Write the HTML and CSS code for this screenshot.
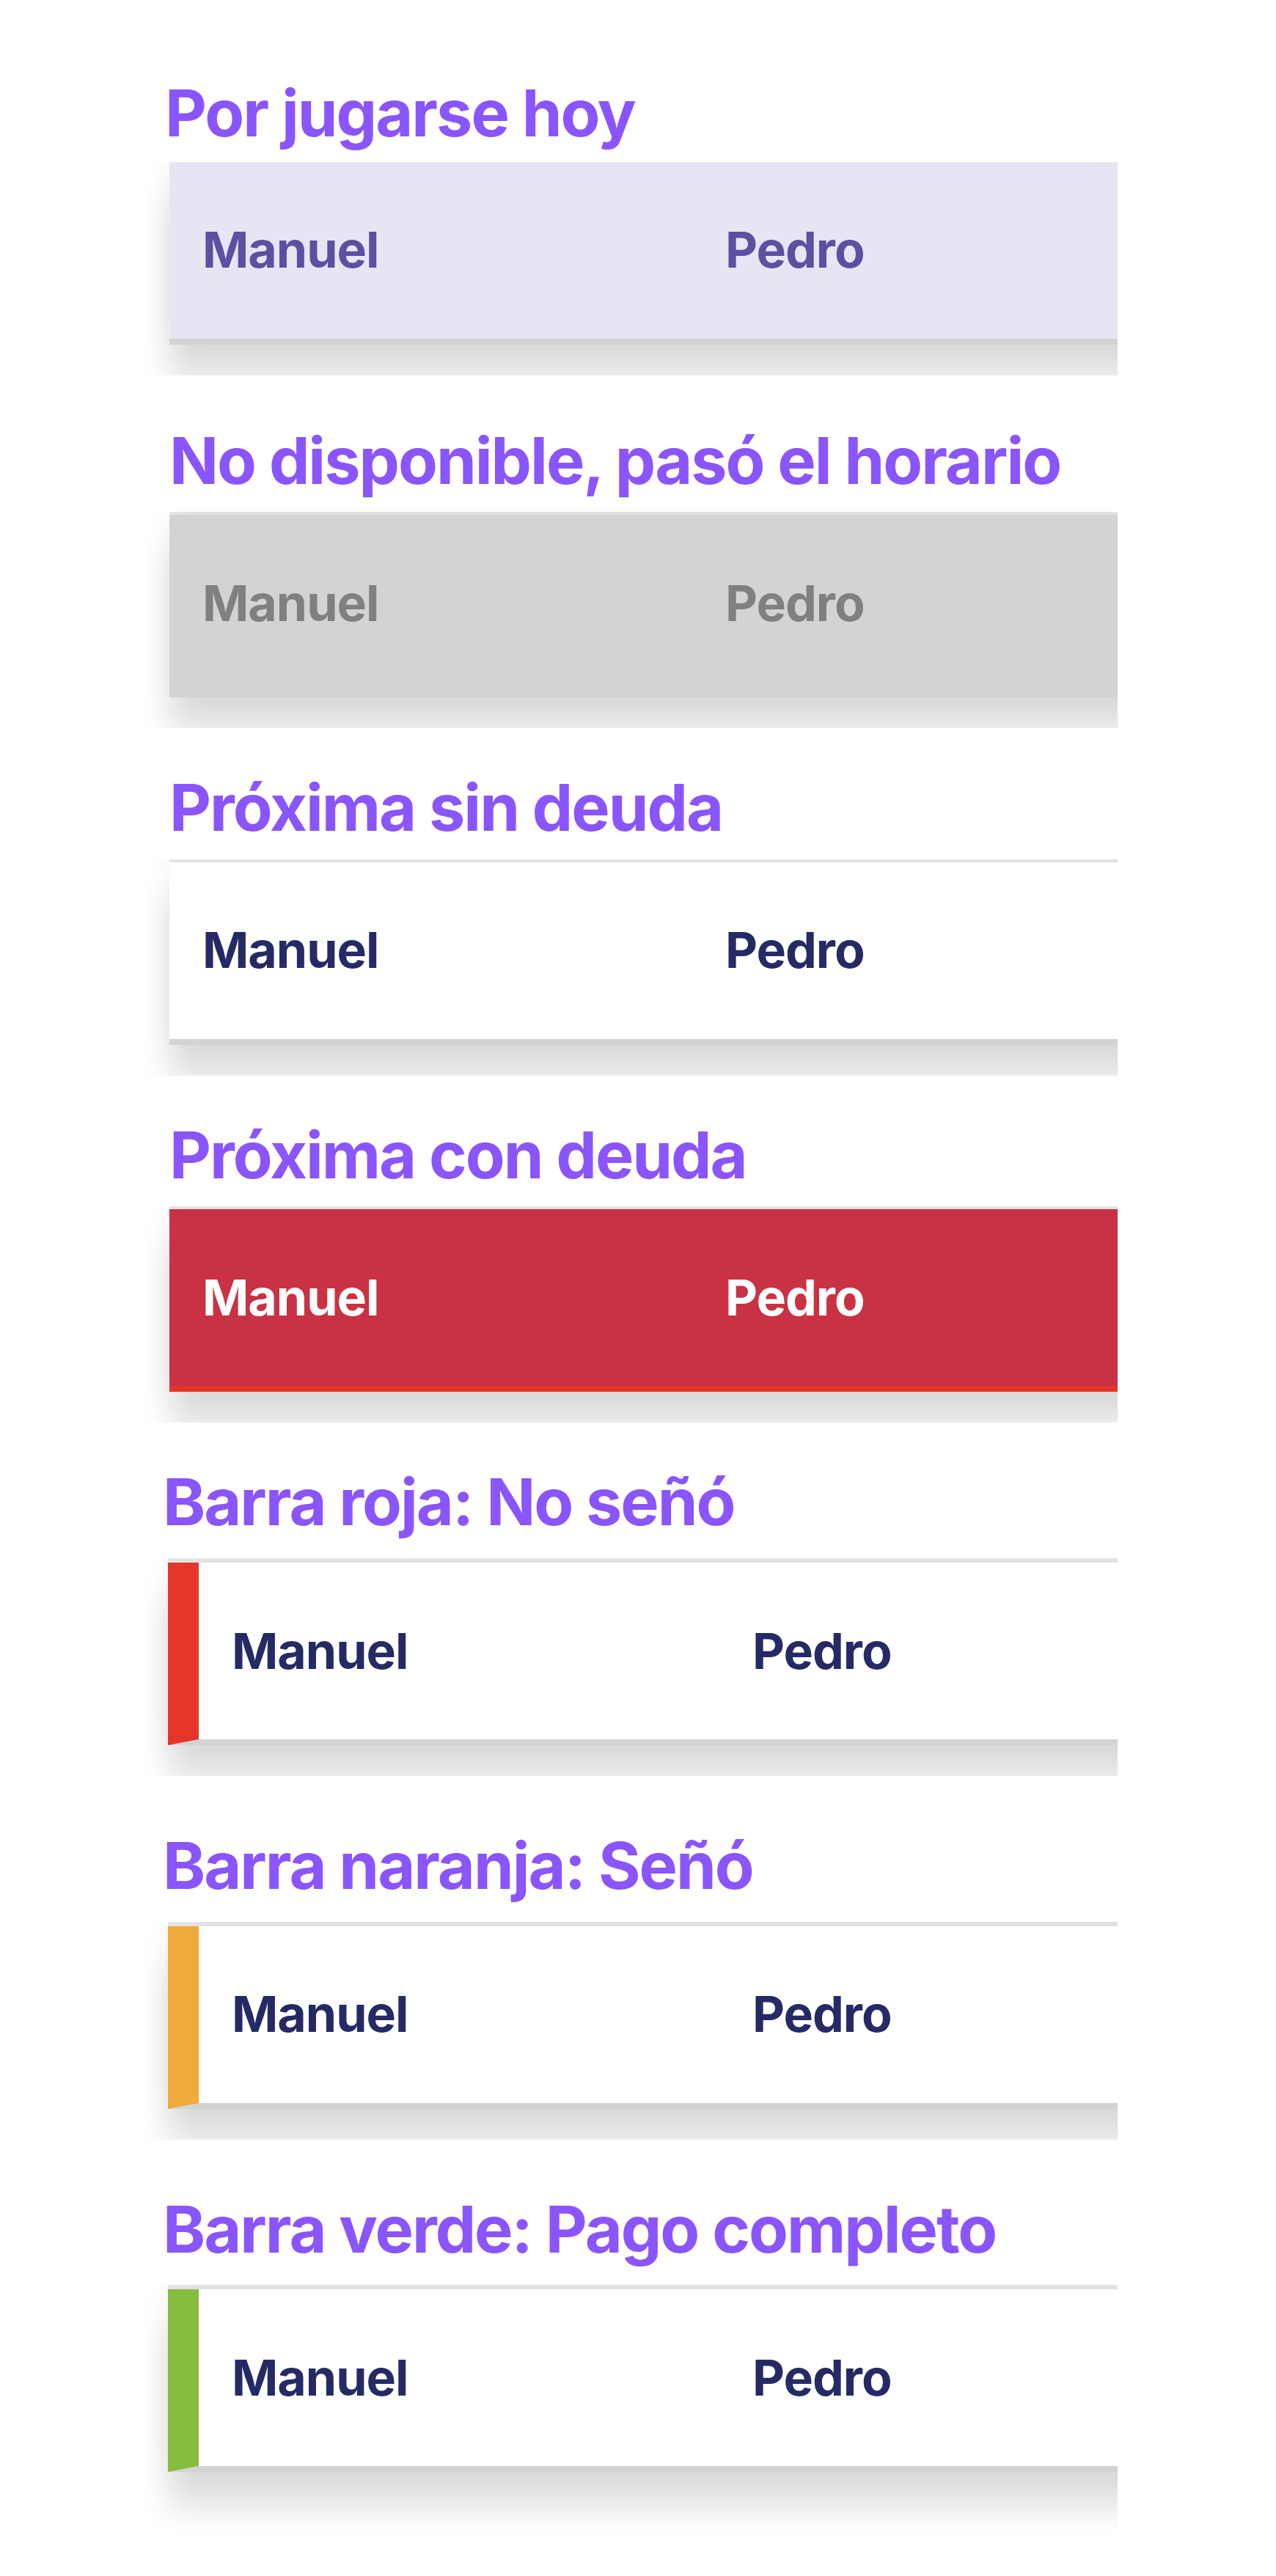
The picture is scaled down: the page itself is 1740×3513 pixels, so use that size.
FILE: index.html
```html
<!DOCTYPE html>
<html lang="es">
<head>
<meta charset="utf-8">
<title>Estados de partido</title>
<link rel="stylesheet" href="styles.css">
</head>
<body>
<main class="board">
  <section class="state state--first">
    <h2 class="state-title">Por jugarse hoy</h2>
    <div class="card-clip">
      <div class="match match--today">
        <span class="player">Manuel</span>
        <span class="player">Pedro</span>
      </div>
    </div>
  </section>

  <section class="state">
    <h2 class="state-title">No disponible, pasó el horario</h2>
    <div class="card-clip">
      <div class="match match--past">
        <span class="player">Manuel</span>
        <span class="player">Pedro</span>
      </div>
    </div>
  </section>

  <section class="state">
    <h2 class="state-title">Próxima sin deuda</h2>
    <div class="card-clip">
      <div class="match">
        <span class="player">Manuel</span>
        <span class="player">Pedro</span>
      </div>
    </div>
  </section>

  <section class="state">
    <h2 class="state-title">Próxima con deuda</h2>
    <div class="card-clip">
      <div class="match match--debt">
        <span class="player">Manuel</span>
        <span class="player">Pedro</span>
      </div>
    </div>
  </section>

  <section class="state state--bar">
    <h2 class="state-title">Barra roja: No señó</h2>
    <div class="card-clip">
      <div class="match match--bar match--red">
        <span class="player">Manuel</span>
        <span class="player">Pedro</span>
      </div>
    </div>
  </section>

  <section class="state state--bar">
    <h2 class="state-title">Barra naranja: Señó</h2>
    <div class="card-clip">
      <div class="match match--bar match--orange">
        <span class="player">Manuel</span>
        <span class="player">Pedro</span>
      </div>
    </div>
  </section>

  <section class="state state--bar state--last">
    <h2 class="state-title">Barra verde: Pago completo</h2>
    <div class="card-clip">
      <div class="match match--bar match--green">
        <span class="player">Manuel</span>
        <span class="player">Pedro</span>
      </div>
    </div>
  </section>
</main>
</body>
</html>
```

FILE: styles.css
```css
* {
  box-sizing: border-box;
}

html,
body {
  margin: 0;
  background: #ffffff;
  font-family: Inter, "Noto Sans", "Liberation Sans", sans-serif;
}

.board {
  width: 1293px;
  padding: 102px 0 0 231px;
  box-sizing: content-box;
}

.state {
  margin-bottom: 56px;
}

.state-title {
  margin: 0 0 17px;
  font-size: 88px;
  line-height: 1.2;
  font-weight: 700;
  letter-spacing: -2px;
  color: #8a55fd;
  white-space: nowrap;
}

.card-clip {
  margin-left: -50px;
  padding: 4px 0 42px 50px;
  overflow: hidden;
}

.match {
  display: flex;
  align-items: center;
  width: 1800px;
  height: 249px;
  padding-left: 45px;
  background: #ffffff;
  border-bottom: 8px solid #d3d3d3;
  box-shadow:
    0 -6px 0 rgba(0, 0, 0, 0.09),
    0 50px 40px rgba(0, 0, 0, 0.12),
    0 0 40px rgba(0, 0, 0, 0.06);
}

.player {
  flex: 0 0 713px;
  font-size: 68px;
  line-height: 1.2;
  font-weight: 700;
  letter-spacing: -1px;
  color: #262a64;
}

.match--today {
  background: #e6e5f4;
}

.match--today .player {
  color: #5c50a0;
}

.match--past {
  background: #d3d3d3;
}

.match--past .player {
  color: #808080;
}

.match--debt {
  background: #c93244;
  border-bottom-color: #e4352a;
}

.match--debt .player {
  color: #ffffff;
}

.match--bar {
  border-left: 42px solid #e4352a;
}

.match--bar .player {
  flex-basis: 710px;
}

.match--red {
  border-left-color: #e4352a;
}

.match--orange {
  border-left-color: #f0ab3d;
}

.match--green {
  border-left-color: #86bd40;
}

/* per-state spacing */
.state--first {
  margin-bottom: 64px;
}

.state--first .state-title {
  margin-bottom: 13px;
  margin-left: -6px;
}

.state--first .card-clip {
  padding-top: 0;
}

.state--bar {
  margin-bottom: 70px;
}

.state--bar .state-title {
  margin-bottom: 23px;
  margin-left: -9px;
}

.state--bar .card-clip {
  padding-top: 6px;
  margin-left: -52px;
}

.state--last .card-clip {
  padding-bottom: 80px;
}
```
